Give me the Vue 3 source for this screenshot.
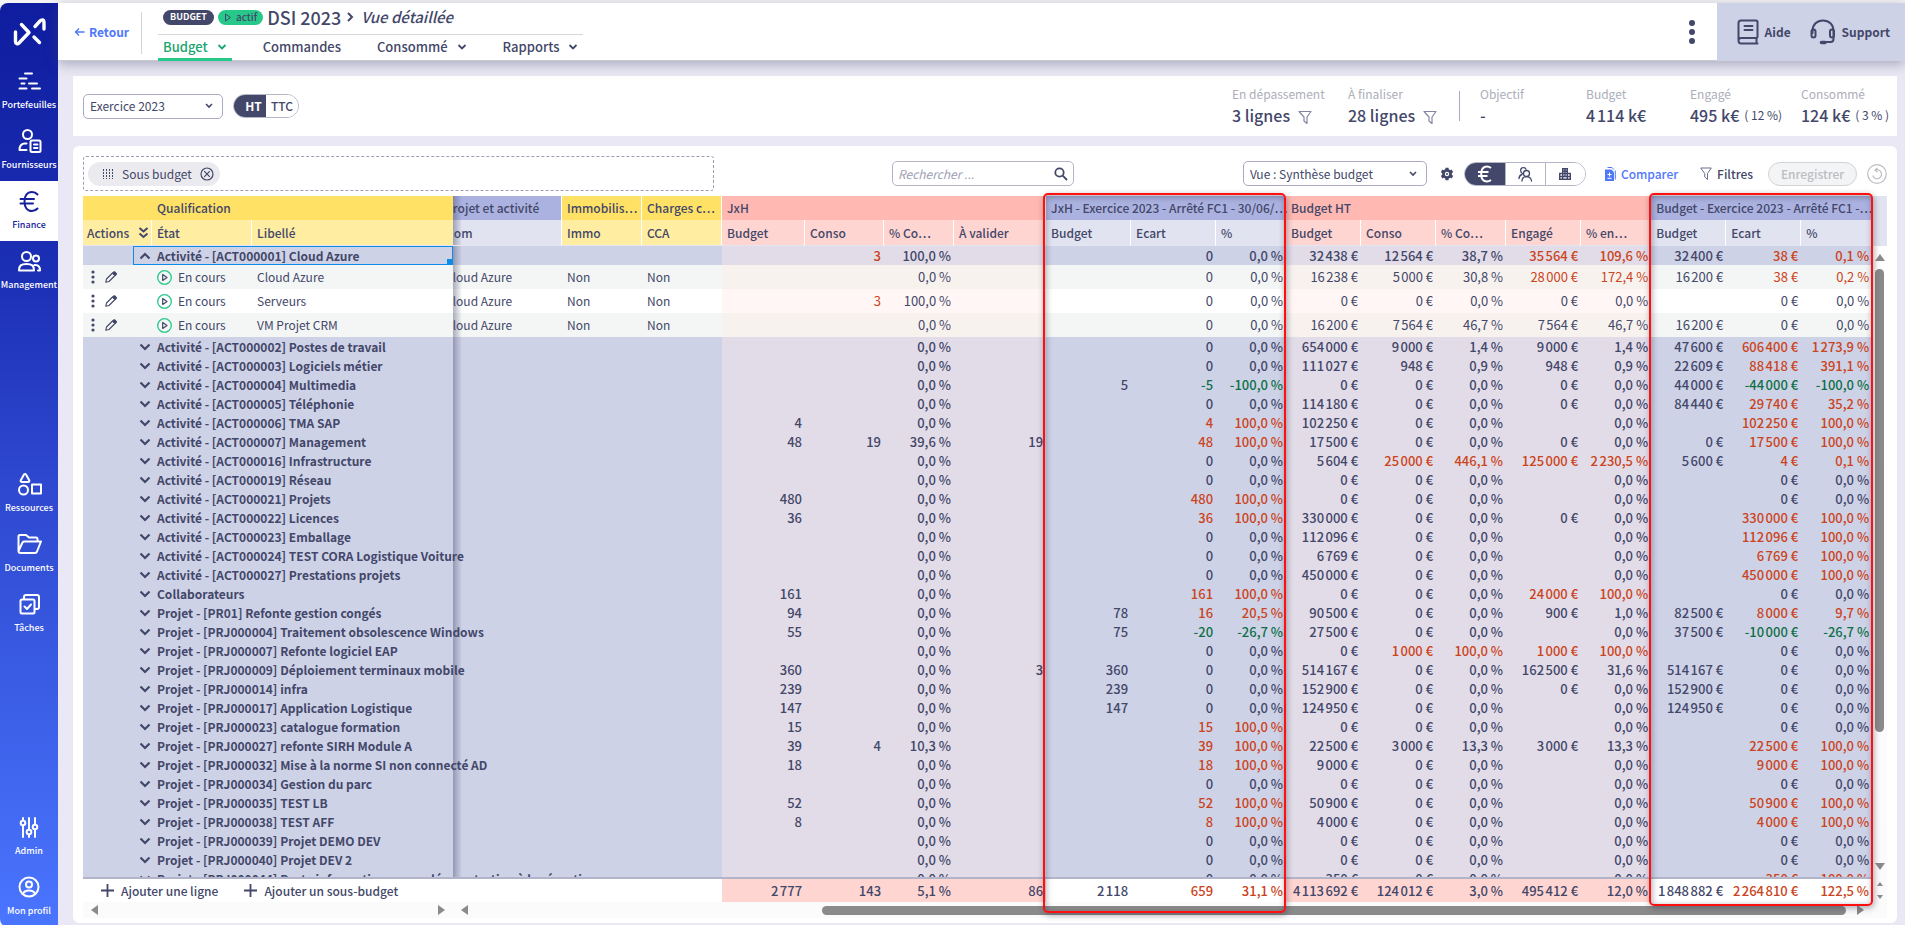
<script setup>
import { ref } from 'vue'

const search = ref('')
const exercise = ref('Exercice 2023')
const view = ref('Vue : Synthèse budget')

const navTop = [
  { icon: 'portfolio', label: 'Portefeuilles' },
  { icon: 'supplier', label: 'Fournisseurs' },
  { icon: 'euro', label: 'Finance', active: true },
  { icon: 'people', label: 'Management' },
]
const navMiddle = [
  { icon: 'shapes', label: 'Ressources' },
  { icon: 'folder', label: 'Documents' },
  { icon: 'tasks', label: 'Tâches' },
]
const navBottom = [
  { icon: 'sliders', label: 'Admin' },
  { icon: 'profile', label: 'Mon profil' },
]
const navGroups = [navTop, navMiddle, navBottom]

const tabs = [
  { label: 'Budget', menu: true, active: true },
  { label: 'Commandes' },
  { label: 'Consommé', menu: true },
  { label: 'Rapports', menu: true },
]

const stats = [
  { label: 'Objectif', value: '-', cls: 'w-goal' },
  { label: 'Budget', value: '4\u202f114 k€', cls: 'w-budget' },
  { label: 'Engagé', value: '495 k€', note: '( 12 %)', cls: 'w-engaged' },
  { label: 'Consommé', value: '124 k€', note: '( 3 % )', cls: 'w-used' },
]

const widths = [69, 100, 201, 109, 80, 80, 83, 79, 70, 92, 85, 85, 70, 75, 75, 70, 75, 70, 75, 75, 71]

const groups = [
  { label: 'Qualification', span: 3, tone: 'yellow', cls: 'qualif' },
  { label: 'Projet et activité', span: 1, tone: 'blue', cls: 'edge' },
  { label: 'Immobilis…', span: 1, tone: 'yellow' },
  { label: 'Charges c…', span: 1, tone: 'yellow' },
  { label: 'JxH', span: 4, tone: 'pink' },
  { label: 'JxH - Exercice 2023 - Arrêté FC1 - 30/06/…', span: 3, tone: 'blue' },
  { label: 'Budget HT', span: 5, tone: 'pink' },
  { label: 'Budget - Exercice 2023 - Arrêté FC1 -…', span: 3, tone: 'blue' },
]
const columns = [
  ['État', 'yellow'], ['Libellé', 'yellow'], ['Nom', 'blue', 'edge'], ['Immo', 'yellow'], ['CCA', 'yellow'],
  ['Budget', 'pink'], ['Conso', 'pink'], ['% Co…', 'pink'], ['À valider', 'pink'],
  ['Budget', 'blue'], ['Ecart', 'blue'], ['%', 'blue'],
  ['Budget', 'pink'], ['Conso', 'pink'], ['% Co…', 'pink'], ['Engagé', 'pink'], ['% en…', 'pink'],
  ['Budget', 'blue'], ['Ecart', 'blue'], ['%', 'blue'],
]

// Unit of each figure column: n = number, e = euro, p = percent
const units = 'nnpnnnpeepepeep'
const pinkCols = [0, 1, 2, 3, 7, 8, 9, 10, 11]

// "!" marks an overrun; negative values are savings
function parse(line) {
  return line.split('|').map((raw, i) => {
    const over = raw.startsWith('!')
    const value = over ? raw.slice(1) : raw
    const grouped = value.replace(/\B(?=(\d{3})+(?!\d))/g, '\u202f')
    const unit = units[i] === 'e' ? '\u00a0€' : units[i] === 'p' ? '\u00a0%' : ''
    return {
      text: value ? grouped + unit : '',
      cls: { over, under: value.startsWith('-'), tint: pinkCols.includes(i) },
    }
  })
}
const row = (name, line) => ({ name, cells: parse(line) })

const opened = row('Activité - [ACT000001] Cloud Azure', '|!3|100,0|||0|0,0|32438|12564|38,7|!35564|!109,6|32400|!38|!0,1')
const details = [
  row('Cloud Azure', '||0,0|||0|0,0|16238|5000|30,8|!28000|!172,4|16200|!38|!0,2'),
  row('Serveurs', '|!3|100,0|||0|0,0|0|0|0,0|0|0,0||0|0,0'),
  row('VM Projet CRM', '||0,0|||0|0,0|16200|7564|46,7|7564|46,7|16200|0|0,0'),
]
const closed = [
  row('Activité - [ACT000002] Postes de travail', '||0,0|||0|0,0|654000|9000|1,4|9000|1,4|47600|!606400|!1273,9'),
  row('Activité - [ACT000003] Logiciels métier', '||0,0|||0|0,0|111027|948|0,9|948|0,9|22609|!88418|!391,1'),
  row('Activité - [ACT000004] Multimedia', '||0,0||5|-5|-100,0|0|0|0,0|0|0,0|44000|-44000|-100,0'),
  row('Activité - [ACT000005] Téléphonie', '||0,0|||0|0,0|114180|0|0,0|0|0,0|84440|!29740|!35,2'),
  row('Activité - [ACT000006] TMA SAP', '4||0,0|||!4|!100,0|102250|0|0,0||0,0||!102250|!100,0'),
  row('Activité - [ACT000007] Management', '48|19|39,6|19||!48|!100,0|17500|0|0,0|0|0,0|0|!17500|!100,0'),
  row('Activité - [ACT000016] Infrastructure', '||0,0|||0|0,0|5604|!25000|!446,1|!125000|!2230,5|5600|!4|!0,1'),
  row('Activité - [ACT000019] Réseau', '||0,0|||0|0,0|0|0|0,0||0,0||0|0,0'),
  row('Activité - [ACT000021] Projets', '480||0,0|||!480|!100,0|0|0|0,0||0,0||0|0,0'),
  row('Activité - [ACT000022] Licences', '36||0,0|||!36|!100,0|330000|0|0,0|0|0,0||!330000|!100,0'),
  row('Activité - [ACT000023] Emballage', '||0,0|||0|0,0|112096|0|0,0||0,0||!112096|!100,0'),
  row('Activité - [ACT000024] TEST CORA Logistique Voiture', '||0,0|||0|0,0|6769|0|0,0||0,0||!6769|!100,0'),
  row('Activité - [ACT000027] Prestations projets', '||0,0|||0|0,0|450000|0|0,0||0,0||!450000|!100,0'),
  row('Collaborateurs', '161||0,0|||!161|!100,0|0|0|0,0|!24000|!100,0||0|0,0'),
  row('Projet - [PR01] Refonte gestion congés', '94||0,0||78|!16|!20,5|90500|0|0,0|900|1,0|82500|!8000|!9,7'),
  row('Projet - [PRJ000004] Traitement obsolescence Windows', '55||0,0||75|-20|-26,7|27500|0|0,0||0,0|37500|-10000|-26,7'),
  row('Projet - [PRJ000007] Refonte logiciel EAP', '||0,0|||0|0,0|0|!1000|!100,0|!1000|!100,0||0|0,0'),
  row('Projet - [PRJ000009] Déploiement terminaux mobile', '360||0,0|3|360|0|0,0|514167|0|0,0|162500|31,6|514167|0|0,0'),
  row('Projet - [PRJ000014] infra', '239||0,0||239|0|0,0|152900|0|0,0|0|0,0|152900|0|0,0'),
  row('Projet - [PRJ000017] Application Logistique', '147||0,0||147|0|0,0|124950|0|0,0||0,0|124950|0|0,0'),
  row('Projet - [PRJ000023] catalogue formation', '15||0,0|||!15|!100,0|0|0|0,0||0,0||0|0,0'),
  row('Projet - [PRJ000027] refonte SIRH Module A', '39|4|10,3|||!39|!100,0|22500|3000|13,3|3000|13,3||!22500|!100,0'),
  row('Projet - [PRJ000032] Mise à la norme SI non connecté AD', '18||0,0|||!18|!100,0|9000|0|0,0||0,0||!9000|!100,0'),
  row('Projet - [PRJ000034] Gestion du parc', '||0,0|||0|0,0|0|0|0,0||0,0||0|0,0'),
  row('Projet - [PRJ000035] TEST LB', '52||0,0|||!52|!100,0|50900|0|0,0||0,0||!50900|!100,0'),
  row('Projet - [PRJ000038] TEST AFF', '8||0,0|||!8|!100,0|4000|0|0,0||0,0||!4000|!100,0'),
  row('Projet - [PRJ000039] Projet DEMO DEV', '||0,0|||0|0,0|0|0|0,0||0,0||0|0,0'),
  row('Projet - [PRJ000040] Projet DEV 2', '||0,0|||0|0,0|0|0|0,0||0,0||0|0,0'),
  row('Projet - [PRJ000044] Poste informatique pour démonstration à la réception', '||0,0|||0|0,0|350|0|0,0||0,0||!350|!100,0'),
]
const totals = parse('2777|143|5,1|86|2118|!659|!31,1|4113692|124012|3,0|495412|12,0|1848882|!2264810|!122,5')
</script>

<template>
  <div class="app">
    <nav class="sidebar" aria-label="Navigation principale">
      <a class="logo" href="#" aria-label="Accueil">
        <svg width="34" height="30" viewBox="0 0 34 30" fill="none" stroke="#fff" stroke-width="3.4" stroke-linecap="round" stroke-linejoin="round">
          <path d="M2.500 15v9.500c0 2.500 2 3 3.500 1.500L16 15.500 8.500 7.500M22 9.500l5-5.500c2-2 4-1.200 4 1.200V12M21 20l5.500 5.500" />
        </svg>
      </a>
      <ul v-for="(items, g) in navGroups" :key="g" class="nav-group">
        <li v-for="item in items" :key="item.label">
          <a class="nav-item" :class="{ active: item.active }" href="#">
            <svg width="26" height="26" viewBox="0 0 26 26" fill="none" stroke="currentColor" stroke-width="2" stroke-linecap="round" stroke-linejoin="round" aria-hidden="true">
              <template v-if="item.icon === 'portfolio'">
                <path d="M9 5.500h7M3.500 10.500h7M5.500 15.500h3M13 15.500h8M3.500 20.500h7M16 20.500h8" />
              </template>
              <template v-else-if="item.icon === 'supplier'">
                <circle cx="11.500" cy="6.500" r="4.500" />
                <path d="M10.500 15.500H9c-3.500 0-5.500 2-5.500 6.500h7" />
                <rect x="14.500" y="12.500" width="10" height="11.500" rx="1.500" />
                <path d="M18 16.500h3.500M18 20h3.500" />
              </template>
              <template v-else-if="item.icon === 'euro'">
                <path d="M21.500 6.500C20 4.700 18.200 4 16 4c-5 0-7.500 4-7.500 9.500S11 23 16 23c2.200 0 4-.8 5.500-2.500M4.500 11H18M4.500 15.500H17" />
              </template>
              <template v-else-if="item.icon === 'people'">
                <circle cx="10.500" cy="8.500" r="4.500" />
                <path d="M3 22.500c0-5 2-6.500 7.500-6.500s7.500 1.500 7.500 6.500zM18.500 17h1c3 0 4.500 2 4.500 5.500h-2" />
                <circle cx="20" cy="10.500" r="3" />
              </template>
              <template v-else-if="item.icon === 'shapes'">
                <path d="M8 3.500c.5-.8 1.500-.8 2 0l3.200 5.700c.5 1-.1 1.800-1.200 1.800H6c-1.100 0-1.700-.8-1.200-1.800z" />
                <circle cx="7.500" cy="19" r="4.500" />
                <rect x="16" y="13.500" width="9" height="9" />
              </template>
              <template v-else-if="item.icon === 'folder'">
                <path d="M2.500 20V5.500c0-1 .5-1.500 1.500-1.500h6l3 2.500h7c1 0 1.500.5 1.500 1.500v2.500M2.500 20l4-8.500c.3-.7.8-1 1.500-1H25L21 20.500c-.3 1-1 1.500-2 1.500H4.500c-1.200 0-2-.8-2-2z" />
              </template>
              <template v-else-if="item.icon === 'tasks'">
                <path d="M8 8V6c0-1.500.5-2 2-2h11c1.500 0 2 .5 2 2v10c0 1.500-.5 2-2 2h-2" />
                <rect x="4.500" y="8.500" width="14" height="14" rx="1.500" />
                <path d="m8.500 15.500 2.500 2.500 4-4.500" />
              </template>
              <template v-else-if="item.icon === 'sliders'">
                <path d="M7 4v2M7 11.500V23M13 4v11M13 21v2M19 4v6M19 16v7" />
                <circle cx="7" cy="9" r="2.300" /><circle cx="13" cy="18" r="2.300" /><circle cx="19" cy="13" r="2.300" />
              </template>
              <template v-else>
                <circle cx="13" cy="13" r="9.500" />
                <circle cx="13" cy="10.500" r="3" />
                <path d="M7 20c1-3 3-3.500 6-3.500s5 .5 6 3.500" />
              </template>
            </svg>
            <span>{{ item.label }}</span>
          </a>
        </li>
      </ul>
    </nav>

    <div class="page">
      <header class="topbar">
        <a class="back" href="#">
          <svg width="12" height="12" viewBox="0 0 12 12" fill="none" stroke="currentColor" stroke-width="1.400" aria-hidden="true"><path d="M10.500 6H2M5 2.500 1.500 6 5 9.500" /></svg>
          Retour
        </a>
        <div class="heading">
          <div class="title-row">
            <span class="badge dark">BUDGET</span>
            <span class="badge green">
              <svg width="8" height="9" viewBox="0 0 8 9" fill="none" stroke="currentColor" aria-hidden="true"><path d="M1.500 1v7L6.500 4.500z" /></svg>
              actif
            </span>
            <h1>DSI 2023</h1>
            <svg class="crumb" width="8" height="12" viewBox="0 0 8 12" fill="none" stroke="currentColor" stroke-width="2" aria-hidden="true"><path d="m2 2 4 4-4 4" /></svg>
            <em>Vue détaillée</em>
          </div>
          <div class="tabs">
            <button v-for="tab in tabs" :key="tab.label" type="button" class="tab" :class="{ active: tab.active }">
              {{ tab.label }}
              <svg v-if="tab.menu" width="10" height="8" viewBox="0 0 10 8" fill="none" stroke="currentColor" stroke-width="1.800" aria-hidden="true"><path d="m1.500 2 3.500 3.500L8.500 2" /></svg>
            </button>
          </div>
        </div>
        <button class="kebab" type="button" aria-label="Plus d'options">
          <svg width="8" height="26" viewBox="0 0 8 26" fill="currentColor"><circle cx="4" cy="4" r="3" /><circle cx="4" cy="13" r="3" /><circle cx="4" cy="22" r="3" /></svg>
        </button>
        <div class="help">
          <a href="#">
            <svg width="22" height="26" viewBox="0 0 22 26" fill="none" stroke="currentColor" stroke-width="2" stroke-linecap="round" stroke-linejoin="round" aria-hidden="true">
              <path d="M1.500 22V4c0-1.700.8-2.500 2.500-2.500h15c1 0 1.500.5 1.500 1.500v14.500c0 1-.5 1.500-1.500 1.500H4c-1.500 0-2.500 1-2.500 2.500S2.500 24.500 4 24.500h16.500M19.500 19v5.500M7.500 7h8M7.500 11h8" />
            </svg>
            Aide
          </a>
          <a href="#">
            <svg width="26" height="26" viewBox="0 0 26 26" fill="none" stroke="currentColor" stroke-width="2" stroke-linecap="round" stroke-linejoin="round" aria-hidden="true">
              <path d="M2.500 14v-2C2.500 5.500 7 1.500 13 1.500S23.500 5.500 23.500 12v8c0 2-1 3-3 3H15" />
              <rect x="1.500" y="10.500" width="4" height="8" rx="2" /><rect x="20" y="10.500" width="4" height="8" rx="2" />
              <path d="M11.500 23.500h3.500" stroke-width="3.500" />
            </svg>
            Support
          </a>
        </div>
      </header>

      <main>
        <section class="card summary">
          <select v-model="exercise" class="select year" aria-label="Exercice">
            <option>Exercice 2023</option>
          </select>
          <div class="segmented tax">
            <button type="button" class="on">HT</button>
            <button type="button">TTC</button>
          </div>
          <div class="stats">
            <div class="stat w-over">
              <span>En dépassement</span>
              <strong>3 lignes
                <svg width="14" height="15" viewBox="0 0 14 15" fill="none" stroke="#8386a3" stroke-width="1.200" stroke-linejoin="round" aria-hidden="true"><path d="M1 1.500h12L9 7v6.500L6 11V7z" /></svg>
              </strong>
            </div>
            <div class="stat w-final">
              <span>À finaliser</span>
              <strong>28 lignes
                <svg width="14" height="15" viewBox="0 0 14 15" fill="none" stroke="#8386a3" stroke-width="1.200" stroke-linejoin="round" aria-hidden="true"><path d="M1 1.500h12L9 7v6.500L6 11V7z" /></svg>
              </strong>
            </div>
            <i class="divider"></i>
            <div v-for="s in stats" :key="s.label" class="stat" :class="s.cls">
              <span>{{ s.label }}</span>
              <strong>{{ s.value }}<small v-if="s.note">{{ s.note }}</small></strong>
            </div>
          </div>
        </section>

        <section class="card grid-card">
          <div class="toolbar">
            <div class="drop-zone">
              <div class="chip">
                <svg width="12" height="10" viewBox="0 0 12 10" stroke="currentColor" stroke-width="1" stroke-dasharray="2 1" aria-hidden="true"><path d="M1.500 0v10M4.500 0v10M7.500 0v10M10.500 0v10" /></svg>
                <span>Sous budget</span>
                <button type="button" aria-label="Retirer Sous budget">
                  <svg width="14" height="14" viewBox="0 0 14 14" fill="none" stroke="currentColor" stroke-width="1.200"><circle cx="7" cy="7" r="6" /><path d="m4.200 4.200 5.600 5.600M9.800 4.200 4.200 9.800" /></svg>
                </button>
              </div>
            </div>
            <label class="search">
              <input v-model="search" type="text" placeholder="Rechercher ..." aria-label="Rechercher" />
              <svg width="14" height="14" viewBox="0 0 14 14" fill="none" stroke="currentColor" stroke-width="1.800" aria-hidden="true"><circle cx="5.500" cy="5.500" r="4.200" /><path d="m8.700 8.700 4.300 4.300" /></svg>
            </label>
            <div class="tools">
              <select v-model="view" class="select view" aria-label="Vue">
                <option>Vue : Synthèse budget</option>
              </select>
              <button class="gear" type="button" aria-label="Paramètres">
                <svg width="14" height="14" viewBox="0 0 14 14" fill="none" aria-hidden="true">
                  <path d="M7 .8v12.400M1.600 3.900l10.800 6.200M1.600 10.100l10.800-6.200" stroke="currentColor" stroke-width="3.200" />
                  <circle cx="7" cy="7" r="4.900" fill="currentColor" /><circle cx="7" cy="7" r="2.200" fill="#fff" /><circle cx="7" cy="7" r="1" fill="currentColor" />
                </svg>
              </button>
              <div class="segmented modes">
                <button type="button" class="on" aria-label="Budget en euros">
                  <svg width="16" height="18" viewBox="0 0 16 18" fill="none" stroke="currentColor" stroke-width="2" aria-hidden="true"><path d="M14 3C12.800 2 11.500 1.500 10 1.500 6 1.500 4.200 4.700 4.200 9S6 16.500 10 16.500c1.500 0 2.800-.5 4-1.500M1 7h10.500M1 11h9.500" /></svg>
                </button>
                <button type="button" aria-label="Équipe">
                  <svg width="16" height="16" viewBox="0 0 16 16" fill="none" stroke="currentColor" stroke-width="1.300" stroke-linecap="round" aria-hidden="true"><circle cx="9.500" cy="7.500" r="3" /><path d="M5 15c.2-3 1.500-4.300 4.500-4.300s4.500 1.300 5 4.300M5.500 7.500C3 6 3 2 6 1.700c1.500-.2 2.500.5 3 1.500M2 12.500c.2-2.500 1-3.500 3-4" /></svg>
                </button>
                <button type="button" aria-label="Entreprise">
                  <svg width="12" height="12" viewBox="0 0 12 12" fill="none" stroke="currentColor" stroke-width="1.400" aria-hidden="true"><path d="M.7 11.300V5.500h3V.7h4.600v4.800h3v5.800zM3.700 5.500v5.800M8.300 5.500v5.800M6 .7v7.800M3.700 3.200h4.600M.7 8.500h10.600M3.700 5.500h4.600" /></svg>
                </button>
              </div>
              <button class="compare" type="button">
                <svg width="11" height="14" viewBox="0 0 11 14" aria-hidden="true"><path d="M2.500.5H7L9 2.500" fill="none" stroke="currentColor" /><path d="M0 2.500h6.500l2.500 2.700V14H0z" fill="currentColor" /><path d="M10.300 3.500v9" stroke="currentColor" fill="none" /><path d="M2.500 7.500h4M4.500 5.500v4M2.500 11.300h4" stroke="#fff" fill="none" /></svg>
                Comparer
              </button>
              <button class="filters" type="button">
                <svg width="12" height="14" viewBox="0 0 12 14" fill="none" stroke="#6b6e8d" stroke-linejoin="round" aria-hidden="true"><path d="M.7 1h10.600L7.500 6.500v6L4.700 10V6.500z" /></svg>
                Filtres
              </button>
              <button class="save" type="button" disabled>Enregistrer</button>
              <button class="undo" type="button" aria-label="Annuler" disabled>
                <svg width="20" height="20" viewBox="0 0 20 20" fill="none" stroke="#bdbdc2" stroke-width="1.200"><circle cx="10" cy="10" r="9.300" /><path d="M8 6.200A4.500 4.500 0 1 1 5.700 11.500M10.500 4 8 6.200 10.500 8" /></svg>
              </button>
            </div>
          </div>

          <div class="sheet">
            <div class="sheet-main">
              <div class="viewport">
                <table>
                  <colgroup><col v-for="(w, i) in widths" :key="i" :style="{ width: w + 'px' }" /></colgroup>
                  <thead>
                    <tr class="groups">
                      <th v-for="g in groups" :key="g.label" :colspan="g.span" :class="[g.tone, g.cls]"><div>{{ g.label }}</div></th>
                    </tr>
                    <tr class="cols">
                      <th class="yellow"><div class="actions">Actions
                        <svg width="11" height="12" viewBox="0 0 11 12" fill="none" stroke="currentColor" stroke-width="2" aria-hidden="true"><path d="m1.500 1 4 3.500 4-3.500M1.500 6.500l4 3.500 4-3.500" /></svg>
                      </div></th>
                      <th v-for="(c, i) in columns" :key="i" :class="[c[1], c[2]]"><div>{{ c[0] }}</div></th>
                    </tr>
                  </thead>
                  <tbody>
                    <tr class="group">
                      <td class="toggle"><svg width="12" height="8" viewBox="0 0 12 8" fill="none" stroke="currentColor" stroke-width="2.200" aria-hidden="true"><path d="m1.500 6.500 4.500-4.500 4.500 4.500" /></svg></td>
                      <td colspan="2" class="name selected">{{ opened.name }}</td>
                      <td class="edge"></td><td></td><td></td>
                      <td v-for="(c, i) in opened.cells" :key="i" class="num" :class="c.cls">{{ c.text }}</td>
                    </tr>
                    <tr v-for="item in details" :key="item.name" class="detail">
                      <td><div class="row-actions">
                        <button type="button" aria-label="Menu"><svg width="4" height="14" viewBox="0 0 4 14" fill="currentColor"><circle cx="2" cy="2" r="1.600" /><circle cx="2" cy="7" r="1.600" /><circle cx="2" cy="12" r="1.600" /></svg></button>
                        <button type="button" aria-label="Modifier"><svg width="12" height="12" viewBox="0 0 12 12" fill="none" stroke="currentColor" stroke-width="1.100" stroke-linejoin="round"><path d="M.8 11.200 1.500 8 7.500 2l2.500 2.500-6 6zM8.500 1l2.500 2.500" /><path d="m7.800 2 2.400 2.400 1.100-1.100c.5-.7-1.600-3-2.400-2.400z" fill="currentColor" /></svg></button>
                      </div></td>
                      <td><div class="state">
                        <svg width="15" height="15" viewBox="0 0 15 15" fill="none" aria-hidden="true"><circle cx="7.500" cy="7.500" r="6.800" stroke="#27c98a" stroke-width="1.300" /><path d="M5.700 4.500v6l4.300-3z" stroke="currentColor" stroke-width="1.200" stroke-linejoin="round" /></svg>
                        En cours
                      </div></td>
                      <td>{{ item.name }}</td>
                      <td class="edge"><div>Cloud Azure</div></td>
                      <td>Non</td>
                      <td>Non</td>
                      <td v-for="(c, i) in item.cells" :key="i" class="num" :class="c.cls">{{ c.text }}</td>
                    </tr>
                    <tr v-for="item in closed" :key="item.name" class="group">
                      <td class="toggle"><svg width="12" height="8" viewBox="0 0 12 8" fill="none" stroke="currentColor" stroke-width="2.200" aria-hidden="true"><path d="m1.500 1.500 4.500 4.500 4.500-4.500" /></svg></td>
                      <td colspan="2" class="name">{{ item.name }}</td>
                      <td class="edge"></td><td></td><td></td>
                      <td v-for="(c, i) in item.cells" :key="i" class="num" :class="c.cls">{{ c.text }}</td>
                    </tr>
                  </tbody>
                </table>
              </div>
              <table class="totals">
                <colgroup><col v-for="(w, i) in widths" :key="i" :style="{ width: w + 'px' }" /></colgroup>
                <tbody>
                  <tr>
                    <td colspan="6"><div class="adds">
                      <button type="button"><svg width="13" height="13" viewBox="0 0 13 13" stroke="currentColor" stroke-width="1.800" aria-hidden="true"><path d="M6.500 0v13M0 6.500h13" /></svg>Ajouter une ligne</button>
                      <button type="button"><svg width="13" height="13" viewBox="0 0 13 13" stroke="currentColor" stroke-width="1.800" aria-hidden="true"><path d="M6.500 0v13M0 6.500h13" /></svg>Ajouter un sous-budget</button>
                    </div></td>
                    <td v-for="(c, i) in totals" :key="i" class="num" :class="c.cls">{{ c.text }}</td>
                  </tr>
                </tbody>
              </table>
              <div class="hscroll">
                <div class="hs left"><i class="arrow to-left"></i><i class="arrow to-right"></i></div>
                <div class="hs right"><i class="arrow to-left"></i><span class="thumb"></span><i class="arrow to-right"></i></div>
              </div>
              <div class="frames">
                <div class="frame first"></div>
                <div class="frame second"></div>
              </div>
            </div>
            <div class="vscroll">
              <div class="vs-head"></div>
              <i class="arrow to-up"></i>
              <div class="vs-track"><span class="thumb"></span></div>
              <i class="arrow to-down"></i>
              <div class="vs-foot"><i class="arrow small to-up"></i><i class="arrow small to-down"></i></div>
            </div>
          </div>
        </section>
      </main>
    </div>
  </div>
</template>

<style>
body { background: #f5f5f6; }
</style>

<style scoped>
* { box-sizing: border-box; }
.app {
  height: 100vh;
  padding-top: 3px;
  display: flex;
  overflow: hidden;
  color: #434769;
  font-family: "Noto Sans CJK SC", "Open Sans", sans-serif;
  font-size: 12px;
  line-height: 18px;
}
button, input, select { font: inherit; color: inherit; margin: 0; padding: 0; border: 0; background: none; }
button { display: inline-flex; align-items: center; justify-content: center; white-space: nowrap; }
a { color: inherit; text-decoration: none; }
svg { flex: none; }

.sidebar {
  width: 58px;
  flex: none;
  display: flex;
  flex-direction: column;
  margin-bottom: -2px;
  background: linear-gradient(#0f1d9f, #1c30b6 30%, #2e48cf 52%, #4a75ff);
  border-radius: 8px 0 0 8px;
  color: #fff;
}
.logo { height: 58px; display: flex; align-items: center; justify-content: center; padding-left: 2px; }
.nav-group { list-style: none; margin: 0; padding: 0; }
.nav-group + .nav-group { margin-top: auto; }
.nav-item { height: 60px; display: flex; flex-direction: column; align-items: center; padding-top: 7px; font-size: 9px; line-height: 16px; font-weight: 500; }
.nav-item span { margin-top: 3px; white-space: nowrap; }
.nav-item.active { background: #fff; color: #16209b; }

.page { flex: 1; min-width: 0; display: flex; flex-direction: column; background: #e9e8f4; }
.topbar { flex: none; height: 58px; display: flex; background: #fff; border-bottom: 1px solid #c9c9cf; box-shadow: 0 3px 12px rgba(67, 71, 105, .4); position: relative; }
.back { align-self: center; display: flex; align-items: center; gap: 3px; margin: 0 12px 0 16px; font-weight: 700; color: #5078fb; }
.heading { padding-left: 16px; border-left: 1px solid #d3d3d8; height: 42px; margin-top: 9px; }
.title-row { display: flex; align-items: center; height: 22px; margin-top: -6px; padding-left: 5px; white-space: nowrap; }
.badge { height: 15px; border-radius: 8px; display: inline-flex; align-items: center; gap: 4px; padding: 0 7px; font-size: 9px; font-weight: 700; }
.badge.dark { background: #434769; color: #fff; margin-right: 4px; }
.badge.green { background: #27c98a; margin-right: 4px; padding: 0 6px; font-weight: 500; font-size: 10px; }
h1 { font-size: 18px; font-weight: 500; margin: 0; }
.crumb { margin: 0 7px 0 5px; }
em { font-size: 15px; font-weight: 500; }
.tabs { display: flex; gap: 26px; border-top: 1px solid #d6d6da; margin-top: 6px; width: max-content; }
.tab { padding: 0 5px; gap: 9px; font-weight: 500; height: 26px; border-bottom: 3px solid transparent; font-size: 13px; }
.tab.active { color: #1ba56f; border-color: #27c98a; }
.kebab { margin-left: auto; margin-right: 21px; }
.help { display: flex; align-items: center; gap: 19px; padding: 0 15px 0 20px; background: #ced2e7; font-weight: 700; margin-bottom: -1px; }
.help a { display: flex; align-items: center; gap: 6px; }

main { flex: 1; min-height: 0; display: flex; flex-direction: column; gap: 10px; padding: 15px 8px 2px 15px; }
.card { background: #fff; }
.summary { flex: none; height: 60px; display: flex; align-items: center; padding: 0 10px; }
.select {
  appearance: none;
  height: 25px;
  border: 1px solid #a9abc0;
  border-radius: 5px;
  padding: 0 24px 0 6px;
  background: #fff url("data:image/svg+xml,%3Csvg xmlns='http://www.w3.org/2000/svg' width='8' height='6' fill='none' stroke='%23434769' stroke-width='1.600'%3E%3Cpath d='m1 1 3 3 3-3'/%3E%3C/svg%3E") no-repeat right 9px center;
}
.year { width: 140px; }
.segmented { display: flex; height: 24px; border: 1px solid #b4b6c8; border-radius: 12px; overflow: hidden; }
.segmented button { background: #fff; }
.segmented .on { background: #434769; color: #fff; }
.tax { margin-left: 10px; }
.tax button { width: 32px; font-weight: 500; }
.tax .on { font-weight: 700; padding-left: 7px; }
.stats { margin-left: auto; display: flex; }
.stat { display: flex; flex-direction: column; white-space: nowrap; padding-bottom: 2px; }
.stat span { color: #acaeb9; line-height: 20px; }
.stat strong { font-size: 16px; line-height: 22px; font-weight: 500; display: flex; align-items: center; gap: 8px; }
.stat small { font-size: 12px; margin-left: -3px; font-weight: 400; }
.stat svg { margin-top: 4px; }
.w-over { width: 116px; }
.w-final { width: 111px; }
.divider { align-self: center; width: 1px; height: 30px; background: #a9abc0; margin-right: 20px; }
.w-goal { width: 106px; }
.w-budget { width: 104px; }
.w-engaged { width: 111px; }
.w-used { width: 86px; }

.grid-card { flex: 1; min-height: 0; display: flex; flex-direction: column; border-radius: 6px; padding: 10px 10px 5px; }
.toolbar { flex: none; display: flex; align-items: flex-start; height: 40px; }
.drop-zone { flex: 0 1 631px; height: 35px; border: 1px dashed #9c9eb4; border-radius: 3px; padding: 5px 4px; }
.chip { height: 24px; width: max-content; display: flex; align-items: center; background: #ebeaef; border-radius: 12px; padding: 0 6px 0 14px; gap: 8px; }
.search { margin: 5px 0 0 178px; width: 182px; height: 25px; flex: none; border: 1px solid #b4b6c8; border-radius: 5px; display: flex; align-items: center; padding: 0 5px; }
.search input { flex: 1; min-width: 0; outline: 0; font-style: italic; }
.search input::placeholder { color: #9c9eb4; opacity: 1; }
.tools { margin: 5px 0 0 auto; display: flex; align-items: center; height: 25px; }
.view { width: 184px; }
.gear { margin: 0 10px 0 13px; }
.modes button { width: 40px; border-left: 1px solid #b4b6c8; }
.modes .on { border-left: 0; }
.compare { color: #5078fb; gap: 5px; margin-left: 19px; font-weight: 500; }
.filters { gap: 5px; margin-left: 22px; font-weight: 500; }
.save { height: 24px; width: 89px; margin-left: 15px; border: 1px solid #d3d3d5; border-radius: 12px; background: #f3f4f5; color: #bcbdc2; font-weight: 500; }
.undo { margin-left: 10px; }

.sheet { flex: 1; min-height: 0; display: flex; }
.sheet-main { flex: 1; min-width: 0; display: flex; flex-direction: column; position: relative; }
.viewport { flex: 1; min-height: 0; overflow: hidden; border-bottom: 2px solid #b2b4c9; }
table { width: 100%; table-layout: fixed; border-collapse: separate; border-spacing: 0; }
th, td { padding: 0 0 0 5px; text-align: left; white-space: nowrap; vertical-align: middle; }
th { font-weight: 500; border-right: 1px solid #fff; }
th:last-child { border-right: 0; }
.groups th { height: 24px; }
.cols th { height: 26px; border-bottom: 1px solid #e4e5f1; }
.groups .yellow { background: #ffe166; }
.groups .blue { background: #abb2e0; }
.groups .pink { background: #ffb8b2; }
.cols .yellow { background: #ffeda2; }
.cols .blue { background: #e1e3f0; }
.cols .pink { background: #ffd5d1; }
.groups .qualif { padding-left: 74px; }
.groups .qualif, .cols th:nth-child(3) { border-right: 0; }
.cols th:first-child { padding-left: 4px; }
.actions { display: flex; align-items: center; justify-content: space-between; padding-right: 2px; }
.groups .edge, .cols .edge, td.edge { padding-left: 0; background-image: linear-gradient(90deg, rgba(67, 71, 105, .42), rgba(67, 71, 105, 0) 9px); }
.edge div { overflow: hidden; text-indent: -8px; }
.group td { height: 19px; line-height: 18px; padding-top: 1px; background-color: #ced2e7; font-weight: 500; }
.group .tint { background-color: #e2dce8; }
.group .name { font-weight: 700; }
.group .toggle { text-align: right; padding: 0 1px 0 0; line-height: 0; }
.name.selected { position: relative; }
.name.selected::before { content: ""; position: absolute; inset: 0 0 0 -19px; border: 1px solid #0b8ce9; }
.name.selected::after { content: ""; position: absolute; right: 0; bottom: 0; width: 6px; height: 6px; background: #0b8ce9; }
.detail td { height: 24px; background-color: #f4f6f5; }
.detail .tint { background-color: #f8f2ef; }
.detail:nth-child(odd) td { background-color: #fff; }
.detail:nth-child(odd) .tint { background-color: #fff6f5; }
.row-actions { display: flex; align-items: center; gap: 10px; padding-left: 3px; }
.state { display: flex; align-items: center; gap: 6px; }
td.num { text-align: right; padding-left: 0; padding-right: 3px; font-size: 13px; }
.num.over { color: #cb4420; }
.num.under { color: #0f7048; }
.totals { flex: none; }
.totals td { height: 23px; font-weight: 500; }
.totals .tint { background: #ffd5d1; }
.adds { display: flex; gap: 26px; padding-left: 13px; }
.adds button { gap: 7px; }
.hscroll { flex: none; height: 16px; display: grid; grid-template-columns: 370fr 1419fr; }
.hs { display: flex; align-items: center; background: #fbfbfc; padding: 0 8px; }
.hs.left { justify-content: space-between; }
.hs.right .thumb { height: 9px; margin-left: auto; width: 73%; border-radius: 5px; background: #8a8a8a; margin-right: 11px; }
.arrow { width: 0; height: 0; border: 5px solid transparent; }
.to-left { border-right: 7px solid #8a8a8a; border-left: 0; }
.to-right { border-left: 7px solid #8a8a8a; border-right: 0; }
.to-up { border-bottom: 7px solid #8a8a8a; border-top: 0; }
.to-down { border-top: 7px solid #8a8a8a; border-bottom: 0; }
.arrow.small { border-left-width: 3px; border-right-width: 3px; }
.small.to-up { border-bottom-width: 4px; }
.small.to-down { border-top-width: 4px; }

.frames { position: absolute; inset: -3px -1px 0 0; display: grid; grid-template-columns: 960fr 243fr 363fr 224fr; pointer-events: none; }
.frame { border: 2px solid #ff0f0f; border-radius: 5px; box-shadow: 1px 2px 6px rgba(40, 40, 60, .4), inset 1px 2px 6px rgba(40, 40, 60, .4); }
.first { grid-column: 2; margin-bottom: 5px; }
.second { grid-column: 4; margin-bottom: 12px; }

.vscroll { flex: none; width: 15px; display: flex; flex-direction: column; align-items: center; background: linear-gradient(#fff, #fbfbfc); }
.vs-head { align-self: stretch; height: 50px; background: #e1e3f0; margin-bottom: 8px; }
.vs-track { flex: 1; align-self: stretch; display: flex; justify-content: center; padding: 8px 0; }
.vscroll .thumb { width: 9px; height: 79%; border-radius: 5px; background: #8a8a8a; }
.vs-foot { height: 48px; display: flex; flex-direction: column; gap: 9px; padding-top: 12px; }
</style>
